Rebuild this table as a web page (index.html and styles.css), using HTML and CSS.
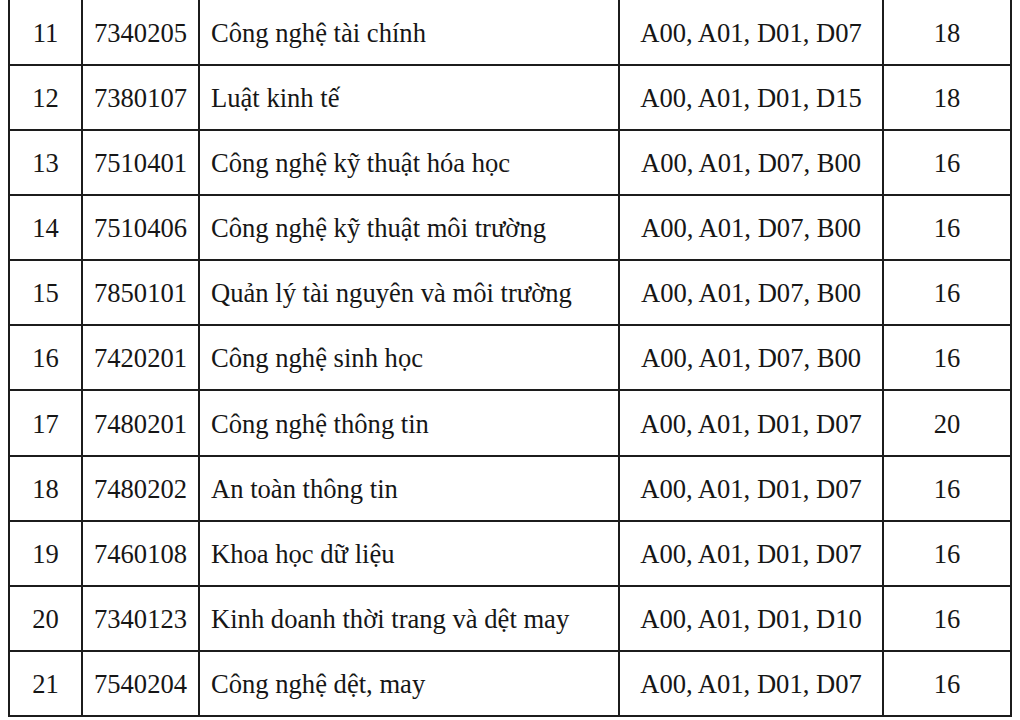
FILE: index.html
```html
<!DOCTYPE html>
<html lang="vi">
<head>
<meta charset="utf-8">
<link rel="stylesheet" href="styles.css">
</head>
<body>
<table class="grid">
  <colgroup>
    <col class="c-stt"><col class="c-code"><col class="c-name"><col class="c-combo"><col class="c-score">
  </colgroup>
  <tbody>
    <tr><td class="ctr">11</td><td class="ctr">7340205</td><td class="name">Công nghệ tài chính</td><td class="ctr">A00, A01, D01, D07</td><td class="ctr">18</td></tr>
    <tr><td class="ctr">12</td><td class="ctr">7380107</td><td class="name">Luật kinh tế</td><td class="ctr">A00, A01, D01, D15</td><td class="ctr">18</td></tr>
    <tr><td class="ctr">13</td><td class="ctr">7510401</td><td class="name">Công nghệ kỹ thuật hóa học</td><td class="ctr">A00, A01, D07, B00</td><td class="ctr">16</td></tr>
    <tr><td class="ctr">14</td><td class="ctr">7510406</td><td class="name">Công nghệ kỹ thuật môi trường</td><td class="ctr">A00, A01, D07, B00</td><td class="ctr">16</td></tr>
    <tr><td class="ctr">15</td><td class="ctr">7850101</td><td class="name">Quản lý tài nguyên và môi trường</td><td class="ctr">A00, A01, D07, B00</td><td class="ctr">16</td></tr>
    <tr><td class="ctr">16</td><td class="ctr">7420201</td><td class="name">Công nghệ sinh học</td><td class="ctr">A00, A01, D07, B00</td><td class="ctr">16</td></tr>
    <tr><td class="ctr">17</td><td class="ctr">7480201</td><td class="name">Công nghệ thông tin</td><td class="ctr">A00, A01, D01, D07</td><td class="ctr">20</td></tr>
    <tr><td class="ctr">18</td><td class="ctr">7480202</td><td class="name">An toàn thông tin</td><td class="ctr">A00, A01, D01, D07</td><td class="ctr">16</td></tr>
    <tr><td class="ctr">19</td><td class="ctr">7460108</td><td class="name">Khoa học dữ liệu</td><td class="ctr">A00, A01, D01, D07</td><td class="ctr">16</td></tr>
    <tr><td class="ctr">20</td><td class="ctr">7340123</td><td class="name">Kinh doanh thời trang và dệt may</td><td class="ctr">A00, A01, D01, D10</td><td class="ctr">16</td></tr>
    <tr><td class="ctr">21</td><td class="ctr">7540204</td><td class="name">Công nghệ dệt, may</td><td class="ctr">A00, A01, D01, D07</td><td class="ctr">16</td></tr>
  </tbody>
</table>
</body>
</html>
```
FILE: styles.css
```css
html, body {
  margin: 0;
  padding: 0;
  background: #ffffff;
}
body {
  font-family: "Liberation Serif", "Times New Roman", serif;
  color: #161616;
  overflow: hidden;
}
.grid {
  border-collapse: collapse;
  table-layout: fixed;
  width: 1002px;
  margin: 0 0 0 8px;
  font-size: 26.6px;
}
.c-stt { width: 73px; }
.c-code { width: 117px; }
.c-name { width: 420px; }
.c-combo { width: 264px; }
.c-score { width: 128px; }
.grid td {
  border: 2px solid #1c1c1c;
  height: 65.1px;
  padding: 2px 0 0;
  box-sizing: border-box;
  vertical-align: middle;
  white-space: nowrap;
}
.grid td.ctr { text-align: center; }
.grid td.name { padding-left: 11px; }
.grid tr:first-child td { border-top: 0; height: 65px; }
```
